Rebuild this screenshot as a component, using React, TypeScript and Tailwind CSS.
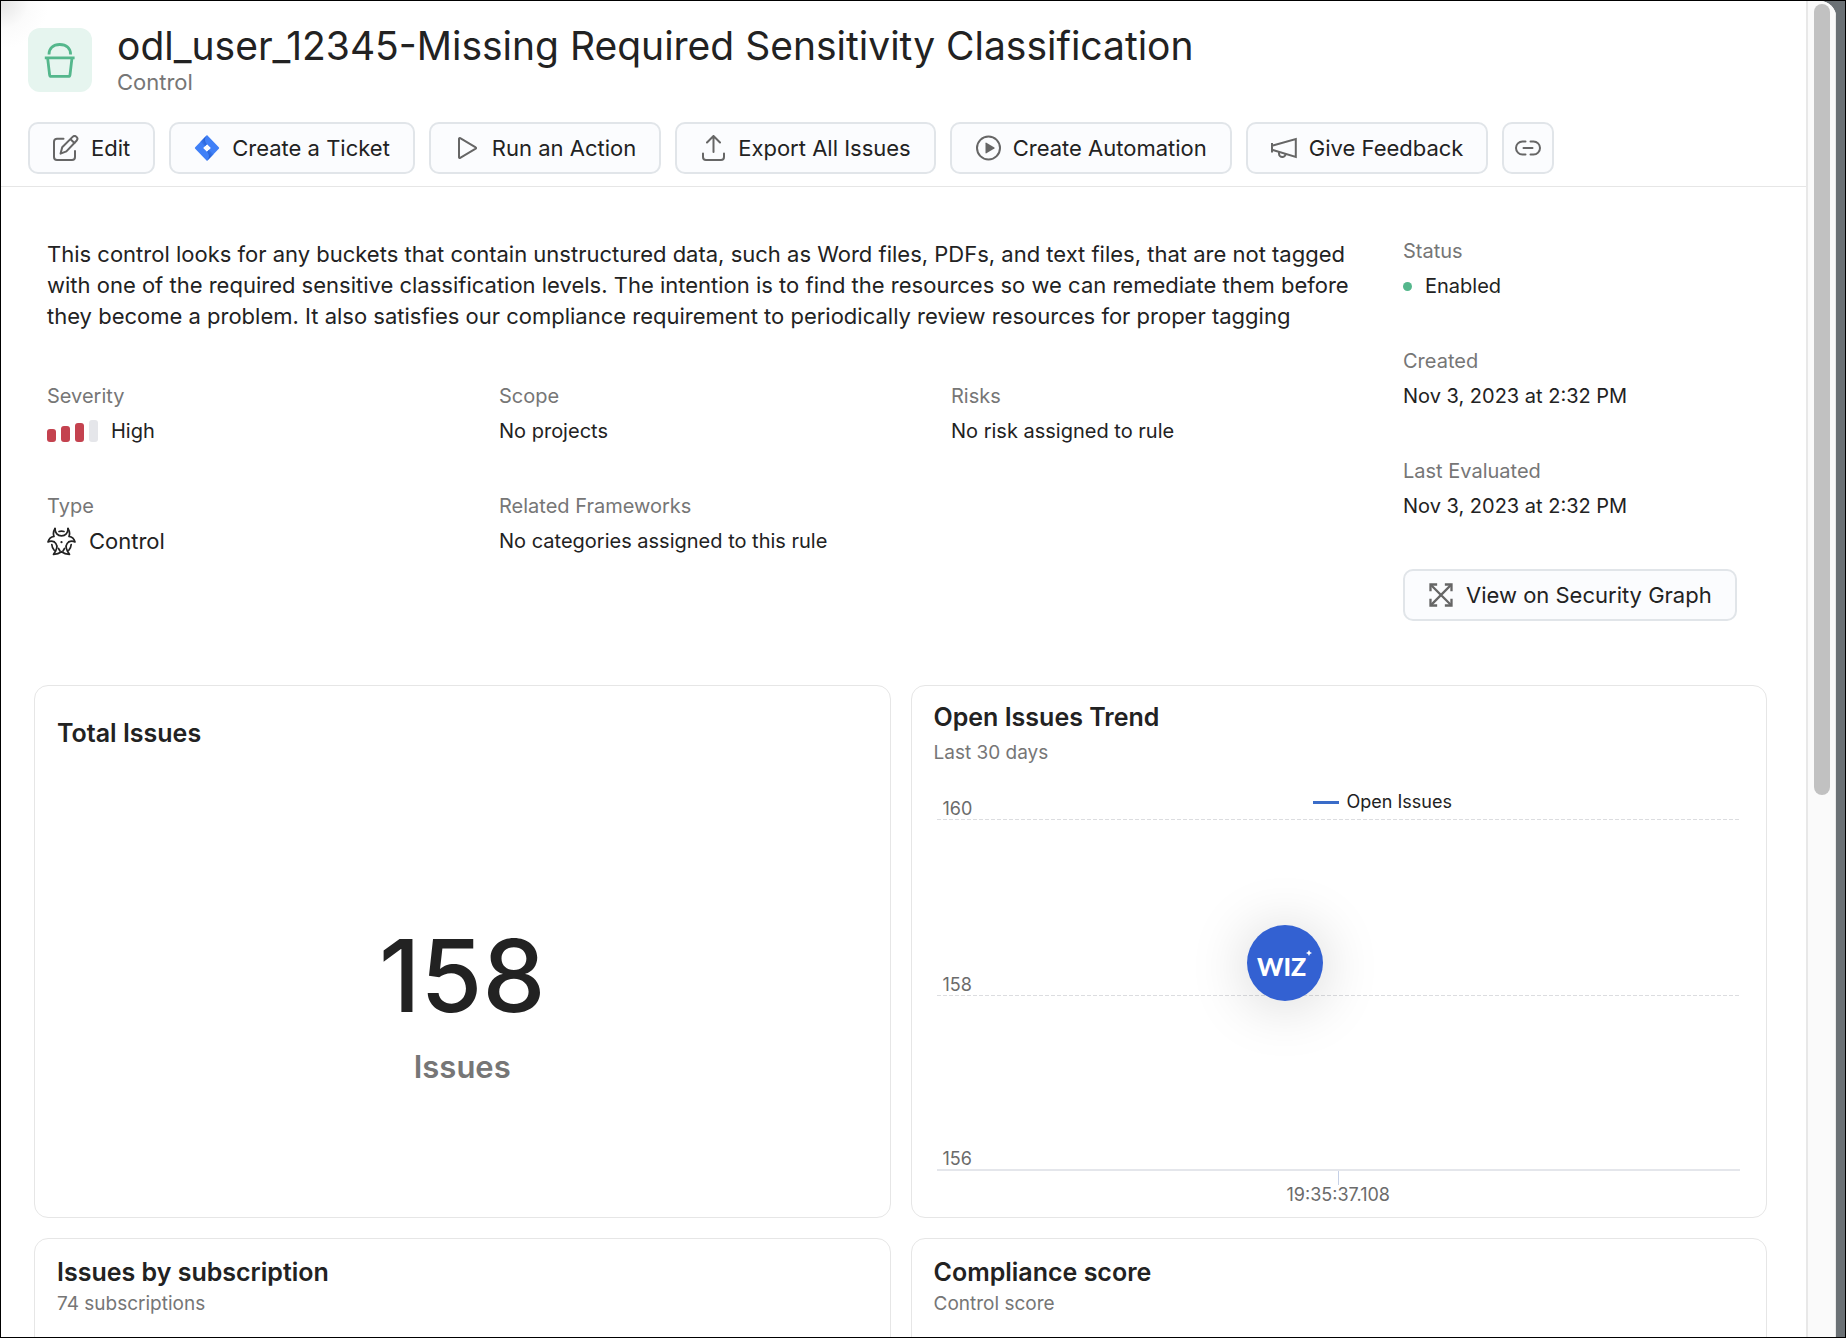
import type { ReactNode } from "react";

const stroke = {
  fill: "none",
  stroke: "#666666",
  strokeWidth: 2,
  strokeLinecap: "round" as const,
  strokeLinejoin: "round" as const,
};

function Icon({ children }: { children: ReactNode }) {
  return (
    <svg viewBox="0 0 26 26" className="size-[26px] shrink-0" aria-hidden="true">
      {children}
    </svg>
  );
}

const EditIcon = () => (
  <Icon>
    <g {...stroke}>
      <path d="M10.5 3.7H4a3 3 0 0 0-3 3V22a3 3 0 0 0 3 3h15a3 3 0 0 0 3-3v-6" />
      <path d="M7.6 18.6l1.6-6.4L19.6 1.9a2.7 2.7 0 0 1 3.9 3.9L13.4 16.4z" />
      <path d="M17.8 4.6l3.6 3.4" />
    </g>
  </Icon>
);

const JiraIcon = () => (
  <Icon>
    <defs>
      <linearGradient id="fold-top" x1="1" y1="0.2" x2="0.2" y2="1">
        <stop offset="0" stopColor="#1b52c4" />
        <stop offset="1" stopColor="#4080f7" />
      </linearGradient>
      <linearGradient id="fold-bottom" x1="0" y1="0.8" x2="0.8" y2="0">
        <stop offset="0" stopColor="#1b52c4" />
        <stop offset="1" stopColor="#4080f7" />
      </linearGradient>
    </defs>
    <path
      fill="#4080f7"
      fillRule="evenodd"
      d="M13 0l11.8 12.2a1.1 1.1 0 0 1 0 1.6L13 26 1.2 13.8a1.1 1.1 0 0 1 0-1.6zM13 9.2L9.2 13l3.8 3.8 3.8-3.8z"
    />
    <path fill="url(#fold-top)" d="M13 9.2C10.4 6.6 10.4 2.8 13 0L6.500 6.7 11 11.2z" />
    <path fill="url(#fold-bottom)" d="M13 16.8c2.600 2.600 2.600 6.400 0 9.200l6.500-6.700-4.500-4.500z" />
  </Icon>
);

const PlayIcon = () => (
  <Icon>
    <path {...stroke} d="M5 3.800v18.400a.8.8 0 0 0 1.200.7L21.700 13.700a.8.8 0 0 0 0-1.400L6.200 3.100A.8.8 0 0 0 5 3.800z" />
  </Icon>
);

const ExportIcon = () => (
  <Icon>
    <path {...stroke} d="M13.500 17V1M7 7.500L13.500 1 20 7.500M3 18.500V22a3 3 0 0 0 3 3h15a3 3 0 0 0 3-3v-3.500" />
  </Icon>
);

const AutomationIcon = () => (
  <Icon>
    <circle {...stroke} cx="13.500" cy="13" r="11.500" />
    <path fill="#666666" d="M10.500 8.200v9.600a.6.600 0 0 0 .9.500l8-4.800a.6.600 0 0 0 0-1l-8-4.800a.6.600 0 0 0-.9.500z" />
  </Icon>
);

const MegaphoneIcon = () => (
  <Icon>
    <g {...stroke} strokeLinecap="butt" strokeLinejoin="miter">
      <path d="M1 8v9.500M1 10.700L24.800 4v18L1 14.800" />
      <path d="M8 17v1.800a3.300 3.300 0 0 0 6.600 0" />
    </g>
  </Icon>
);

const LinkIcon = () => (
  <Icon>
    <path {...stroke} d="M10.500 6.500H7.500a6.500 6.500 0 0 0 0 13h3M15.500 6.500h3a6.500 6.500 0 0 1 0 13h-3M8.500 13h9" />
  </Icon>
);

const GraphIcon = () => (
  <Icon>
    <g {...stroke} strokeWidth={2.3} strokeLinecap="square" strokeLinejoin="miter">
      <path d="M2.500 8V2.500H8M18 2.500h5.500V8M23.500 18v5.500H18M8 23.500H2.500V18" />
      <path d="M3.500 3.500l19 19M22.500 3.500l-19 19" />
    </g>
  </Icon>
);

const BucketIcon = () => (
  <svg viewBox="0 0 64 64" className="size-16" aria-hidden="true">
    <g fill="none" stroke="#54b78c" strokeWidth="2.800" strokeLinejoin="round">
      <path d="M21 26.500c0-6.500 4.400-10 10.800-10S42.600 20 42.600 26.500" />
      <path d="M16.800 29.800h29.800" />
      <path d="M19.600 29.800l2 17a1.800 1.800 0 0 0 1.800 1.600h16.800a1.800 1.800 0 0 0 1.800-1.600l2-17" />
    </g>
  </svg>
);

const ControlIcon = () => (
  <svg viewBox="0 0 29 29" className="size-[29px] shrink-0" aria-hidden="true">
    <g fill="none" stroke="#222222" strokeWidth="1.700" strokeLinejoin="round" strokeLinecap="round">
      <path d="M8 1.500C6.500 4 6 7 7 9.500 4 9.800 1.800 11.600 1 15c2-1.200 4-1.300 6-.3M21 1.500C22.500 4 23 7 22 9.500c3 .3 5.200 2.100 6 5.500-2-1.200-4-1.300-6-.3" />
      <path d="M8 1.500c0 4.500 2.600 7.300 6.500 7.300S21 6 21 1.500" />
      <path d="M7 14.700c3 2.300 3.600 6 1.600 9.300L6.500 27.500c3-.3 5.500-1 8-2.800 2.500 1.800 5 2.500 8 2.800L20.400 24c-2-3.300-1.400-7 1.600-9.300" />
      <path d="M12 4.500c1.600-.5 3.400-.5 5 0M4.800 17.500c.2 2.500 1 4.200 2.400 5.800M24.200 17.500c-.2 2.500-1 4.200-2.400 5.800M11.500 21.500l1.500 2.500M17.500 21.500L16 24" />
    </g>
    <circle cx="14.500" cy="15.200" r="1.100" fill="#222222" />
  </svg>
);

function Button({ icon, children, label }: { icon: ReactNode; children?: ReactNode; label?: string }) {
  return (
    <button
      type="button"
      aria-label={label}
      className={`flex h-[52px] items-center gap-3 whitespace-nowrap rounded-[10px] border-2 border-[#e1e5e9] bg-[#fbfcfe] text-[22px] leading-7 text-[#222222] ${
        children ? "px-[23px]" : "px-[11px]"
      }`}
    >
      {icon}
      {children}
    </button>
  );
}

function Field({ label, children }: { label: string; children: ReactNode }) {
  return (
    <div className="text-xl leading-7">
      <dt className="text-[#767676]">{label}</dt>
      <dd className="mt-[7px] flex h-7 items-center whitespace-nowrap">{children}</dd>
    </div>
  );
}

const gridLine =
  "h-px bg-[repeating-linear-gradient(to_right,#dcdde0_0,#dcdde0_4px,transparent_4px,transparent_6px)]";

function SeverityBars() {
  return (
    <span className="mr-[13px] flex items-end gap-[5px]" aria-hidden="true">
      <span className="h-[13px] w-[9px] rounded-[3px] bg-[#c4424f]" />
      <span className="h-4 w-[9px] rounded-[3px] bg-[#c4424f]" />
      <span className="h-[19px] w-[9px] rounded-[3px] bg-[#c4424f]" />
      <span className="h-[22px] w-[9px] rounded-[3px] bg-[#e5e6ea]" />
    </span>
  );
}

function WizBadge() {
  return (
    <button
      type="button"
      aria-label="Wiz"
      className="absolute left-[38.600%] top-[105px] flex size-[76px] items-center justify-center rounded-full bg-[#3361d2] font-['Lato',sans-serif] text-[25px] font-black text-white shadow-[0_4px_60px_rgba(0,0,0,0.18)]"
    >
      <span className="mr-1.5 mt-1.5">WIZ</span>
      <svg viewBox="0 0 6 6" className="absolute right-[11px] top-[25px] size-1.5" aria-hidden="true">
        <path fill="#ffffff" d="M3 0l1 2 2 1-2 1-1 2-1-2-2-1 2-1z" />
      </svg>
    </button>
  );
}

function TrendChart() {
  return (
    <div className="ml-[25px] mr-[26px] text-lg leading-5 text-[#6b6b6b]">
      <div className="grid h-[53px] grid-cols-[46.800%_1fr] items-end">
        <span className="pl-1.5">160</span>
        <span className="flex items-center gap-2 pb-[7px] text-[#222222]">
          <span className="h-[3px] w-[26px] bg-[#3a6cc8]" />
          Open Issues
        </span>
      </div>
      <div className={gridLine} />
      <div className="relative flex h-[175px] items-end pl-1.5">
        158
        <WizBadge />
      </div>
      <div className={gridLine} />
      <div className="flex h-[173px] items-end pl-1.5">156</div>
      <div className="h-0.5 bg-[#e4e6eb]" />
      <div className="mx-auto h-3.5 w-px bg-[#c5d0e6]" />
      <div className="text-center">19:35:37.108</div>
    </div>
  );
}

const card = "overflow-hidden rounded-[14px] border border-[#e6e6e6]";
const cardTitle = "px-[22px] text-[25px] font-semibold leading-[30px]";
const cardSub = "px-[22px] text-[19px] leading-[26px] text-[#767676]";

export default function App() {
  return (
    <div className="flex h-screen overflow-hidden border border-black bg-[#6b7175] font-['Inter',sans-serif] text-[#222222]">
      <div className="mr-[9px] flex min-w-0 flex-1 overflow-hidden rounded-tr-2xl bg-white">
        <main className="min-w-0 flex-1 overflow-hidden bg-[radial-gradient(circle_at_0_0,#e4e4e4_0,#fbfbfb_28px,#ffffff_48px)]">
          <header className="border-b border-[#e6e6e6] px-[27px] pb-3 pt-[23px]">
            <div className="flex items-center gap-[25px]">
              <span className="rounded-xl bg-[#e6f5ef]">
                <BucketIcon />
              </span>
              <div>
                <h1 className="whitespace-nowrap text-[39px] leading-[44px]">
                  odl_user_12345-Missing Required Sensitivity Classification
                </h1>
                <p className="text-[22px] leading-7 text-[#767676]">Control</p>
              </div>
            </div>
            <div className="mt-[26px] flex gap-3.5">
              <Button icon={<EditIcon />}>Edit</Button>
              <Button icon={<JiraIcon />}>Create a Ticket</Button>
              <Button icon={<PlayIcon />}>Run an Action</Button>
              <Button icon={<ExportIcon />}>Export All Issues</Button>
              <Button icon={<AutomationIcon />}>Create Automation</Button>
              <Button icon={<MegaphoneIcon />}>Give Feedback</Button>
              <Button icon={<LinkIcon />} label="Copy link" />
            </div>
          </header>

          <section className="flex gap-[52px] px-[46px] pb-16 pt-[50px]">
            <div className="min-w-0 flex-1">
              <p className="mt-0.5 text-[22px] leading-[31px]">
                This control looks for any buckets that contain unstructured data, such as Word files, PDFs, and text
                files, that are not tagged with one of the required sensitive classification levels. The intention is to
                find the resources so we can remediate them before they become a problem. It also satisfies our
                compliance requirement to periodically review resources for proper tagging
              </p>
              <dl className="mt-[50px] grid grid-cols-3 gap-x-[52px] gap-y-[47px]">
                <Field label="Severity">
                  <SeverityBars />
                  High
                </Field>
                <Field label="Scope">No projects</Field>
                <Field label="Risks">No risk assigned to rule</Field>
                <Field label="Type">
                  <ControlIcon />
                  <span className="ml-[13px] text-[22px]">Control</span>
                </Field>
                <Field label="Related Frameworks">No categories assigned to this rule</Field>
              </dl>
            </div>
            <div className="w-[357px] shrink-0">
              <dl className="mb-[49px] grid gap-y-[47px]">
                <Field label="Status">
                  <span className="mr-[13px] size-[9px] rounded-full bg-[#54b78c]" aria-hidden="true" />
                  Enabled
                </Field>
                <Field label="Created">Nov 3, 2023 at 2:32 PM</Field>
                <Field label="Last Evaluated">Nov 3, 2023 at 2:32 PM</Field>
              </dl>
              <Button icon={<GraphIcon />}>View on Security Graph</Button>
            </div>
          </section>

          <section className="grid grid-cols-2 gap-5 pl-[33px] pr-[39px]">
            <article className={`${card} min-h-[533px] pt-8`}>
              <h2 className={cardTitle}>Total Issues</h2>
              <p className="mt-[178px] text-center text-[100px] font-medium leading-none">158</p>
              <p className="mt-[21px] text-center text-[31px] font-semibold leading-10 text-[#767676]">Issues</p>
            </article>
            <article className={`${card} min-h-[533px] pt-4`}>
              <h2 className={cardTitle}>Open Issues Trend</h2>
              <p className={`${cardSub} mt-2`}>Last 30 days</p>
              <TrendChart />
            </article>
            <article className={`${card} min-h-[400px] pt-[18px]`}>
              <h2 className={cardTitle}>Issues by subscription</h2>
              <p className={`${cardSub} mt-1`}>74 subscriptions</p>
            </article>
            <article className={`${card} min-h-[400px] pt-[18px]`}>
              <h2 className={cardTitle}>Compliance score</h2>
              <p className={`${cardSub} mt-1`}>Control score</p>
            </article>
          </section>
        </main>

        <div className="w-[30px] shrink-0 border-l-2 border-r border-[#e8e8e8] bg-[#fafafa] pl-1.5 pt-[3px]" aria-hidden="true">
          <div className="h-[791px] w-4 rounded-full bg-[#c1c1c1]" />
        </div>
      </div>
    </div>
  );
}
